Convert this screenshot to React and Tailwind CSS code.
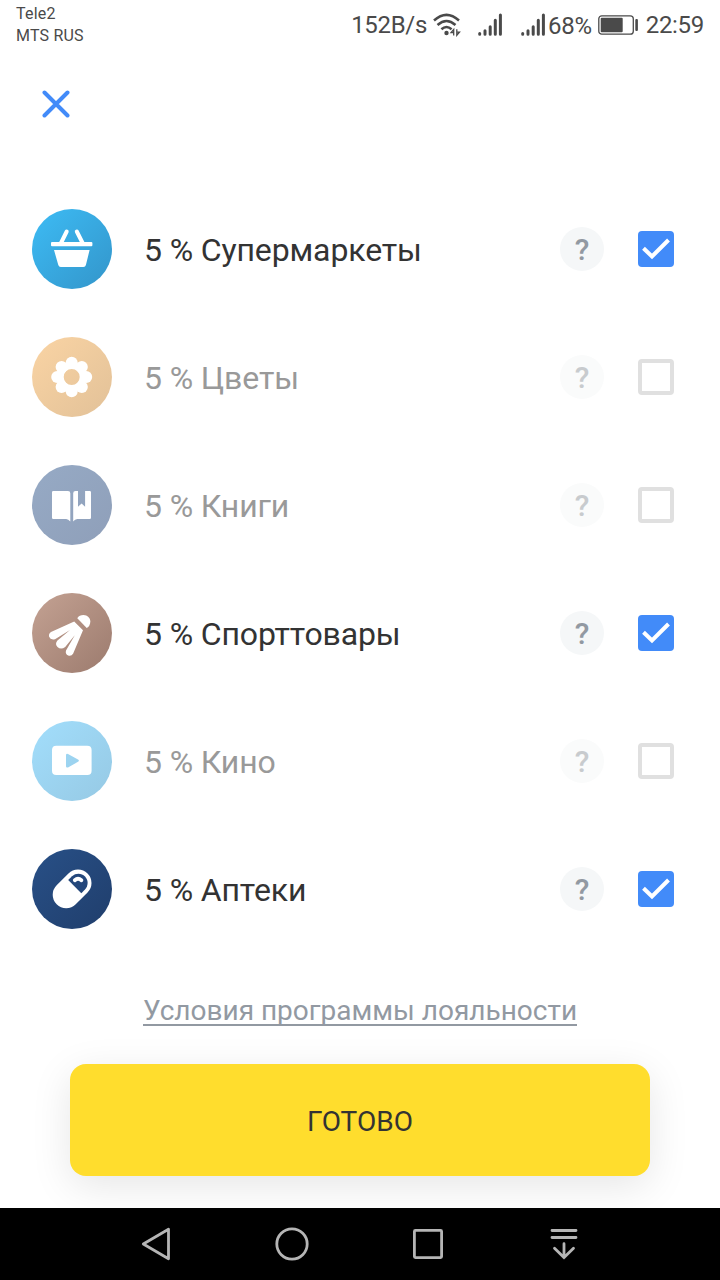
import React from 'react';

function BasketIcon() {
  return (
    <svg viewBox="0 0 80 80" className="w-20 h-20" fill="#fff">
      <path d="M34.7 22.5 29 34M44.8 22.5 50.6 34" stroke="#fff" strokeWidth="4" strokeLinecap="round" />
      <rect x="19" y="33" width="41.4" height="4.3" rx="1" />
      <path d="M22 41h35.6l-3.7 15q-.5 2-2.5 2H28.8q-2 0-2.5-2z" />
    </svg>
  );
}

function FlowerIcon() {
  return (
    <svg viewBox="0 0 80 80" className="w-20 h-20" fill="#fff">
      <circle cx="39.7" cy="25.7" r="6" />
      <circle cx="49.8" cy="29.9" r="6" />
      <circle cx="54.2" cy="40" r="6" />
      <circle cx="49.8" cy="50.1" r="6" />
      <circle cx="39.7" cy="54.3" r="6" />
      <circle cx="29.6" cy="50.1" r="6" />
      <circle cx="25.2" cy="40" r="6" />
      <circle cx="29.6" cy="29.9" r="6" />
      <circle cx="39.7" cy="40" r="11.2" fill="none" stroke="#fff" strokeWidth="6.4" />
    </svg>
  );
}

function BookIcon() {
  return (
    <svg viewBox="0 0 80 80" className="w-20 h-20" fill="#fff">
      <path d="M21.3 26H36q2.3 0 2.3 2.3V56.5Q36.3 54 34.2 54H21.3q-1.3 0-1.3-1.3V27.3q0-1.3 1.3-1.3z" />
      <path d="M46 26v15.7l3.6-3.1 3.5 3.1V26h4.6q1.3 0 1.3 1.3v25.4q0 1.3-1.3 1.3H45.3q-2.4 0-4.1 2.5V28.3Q41.2 26 43.5 26z" />
    </svg>
  );
}

function ShuttlecockIcon() {
  return (
    <svg viewBox="0 0 80 80" className="w-20 h-20" fill="#fff">
      <path d="M45.3 25.3C46.4 23 48.8 22 51.5 22c4 0 6.8 3 6.8 6.5 0 3-1.3 5.3-3.6 6.5z" />
      <path d="M42.2 28.6 51 37.3 41.2 60.4Q39.4 63.6 36.2 62.5 33 61 34 57.4L42.8 42.2 33.2 54Q29 57.2 25.5 54 22.7 51 25.2 47.7L38 37 23 46.2Q18.4 47.2 17.1 43.8 16.4 40.8 19 39z" />
    </svg>
  );
}

function PlayIcon() {
  return (
    <svg viewBox="0 0 80 80" className="w-20 h-20" fill="#fff">
      <path
        fillRule="evenodd"
        d="M24.3 24.7h31q4.3 0 4.3 4.3v20.7q0 4.3-4.3 4.3h-31Q20 54 20 49.7V29q0-4.3 4.3-4.3zM36 33q-2-.6-2 1.2v11q0 1.9 2 1.2l10-5.6q1.8-1.2 0-2.3z"
      />
    </svg>
  );
}

function PillIcon() {
  return (
    <svg viewBox="0 0 80 80" className="w-20 h-20">
      <path d="M34.2 45.8 46 34" stroke="#fff" strokeWidth="27" strokeLinecap="round" />
      <path d="M36.2 31 49.3 44.2 53 40.4C56.6 36.6 56.4 31 53 27.5 49.5 24 43.8 24 40 27.3z" fill="#24477b" />
      <path d="M42.8 31.2Q46 28.4 49.4 31.2" fill="none" stroke="#fff" strokeWidth="3.8" strokeLinecap="round" />
    </svg>
  );
}

const categories = [
  { name: 'Супермаркеты', Icon: BasketIcon, color: 'from-[#3dbcf5] to-[#3395ca]', checked: true },
  { name: 'Цветы', Icon: FlowerIcon, color: 'from-[#fad4a4] to-[#e2c198]', checked: false },
  { name: 'Книги', Icon: BookIcon, color: 'from-[#96aac5] to-[#8f9fb9]', checked: false },
  { name: 'Спорттовары', Icon: ShuttlecockIcon, color: 'from-[#c4a293] to-[#9c7b6e]', checked: true },
  { name: 'Кино', Icon: PlayIcon, color: 'from-[#a2defc] to-[#96c9e4]', checked: false },
  { name: 'Аптеки', Icon: PillIcon, color: 'from-[#285087] to-[#203e6c]', checked: true },
];

function Signal() {
  return (
    <svg viewBox="0 0 24 24" className="w-6 h-6 shrink-0" stroke="#4a4a4a" strokeWidth="3" strokeLinecap="round">
      <path d="M1.7 21.3v-.8M7 21.3v-3.5M12.2 21.3v-7.6M17.3 21.3V7.3M22.4 21.3V2" />
    </svg>
  );
}

function StatusBar() {
  return (
    <header className="flex justify-between h-[50px] px-4 text-[#4a4a4a]">
      <div className="pt-[3px] text-base leading-[22px] tracking-[0.2px]">
        <p>Tele2</p>
        <p>MTS RUS</p>
      </div>
      <div className="flex items-center text-2xl tracking-[-0.3px] whitespace-nowrap">
        <span>152B/s</span>
        <svg viewBox="0 0 28 24" className="w-7 h-6 ml-[6px] mr-[17px]" fill="none" stroke="#4a4a4a" strokeWidth="2.5">
          <path d="M1 7.5Q13.5-3.8 26 7.5M4.5 12Q13.5 4 22.5 12M8.4 16.3Q13.5 11.7 18.6 16.3" />
          <circle cx="13.5" cy="20" r="2.2" fill="#4a4a4a" stroke="none" />
          <path d="M20.7 22.5v-6l-2.7 3.2h3M23.8 16.3v6l2.7-3.2h-3" strokeWidth="1.3" />
        </svg>
        <Signal />
        <span className="w-[19px]" />
        <Signal />
        <span className="ml-[3px] pt-px">68%</span>
        <svg viewBox="0 0 42 22" className="w-[42px] h-[22px] ml-[6px] mr-[6px]" fill="#4a4a4a">
          <rect x=".8" y="1.8" width="34.5" height="18.4" rx="3" fill="none" stroke="#4a4a4a" strokeWidth="1.3" />
          <rect x="2.7" y="3.7" width="22" height="14.6" rx="1" />
          <rect x="37.3" y="5" width="2.6" height="12" rx="1" />
        </svg>
        <span>22:59</span>
      </div>
    </header>
  );
}

function CategoryRow({ name, Icon, color, checked }) {
  return (
    <li className="flex items-center h-32 pl-8 pr-[46px]">
      <span className={`w-20 h-20 shrink-0 rounded-full bg-gradient-to-br ${color}`}>
        <Icon />
      </span>
      <span
        className={`flex-1 ml-8 pt-px text-[32px] leading-10 tracking-[-0.13px] ${
          checked ? 'text-[#333333]' : 'text-[#999999]'
        }`}
      >
        5 % {name}
      </span>
      <button
        className={`w-11 h-11 pt-px mr-[34px] rounded-full text-[30px] leading-[43px] font-medium ${
          checked ? 'bg-[#f5f7f8] text-[#9299a2]' : 'bg-[#fafbfb] text-[#c8cbce]'
        }`}
      >
        ?
      </button>
      {checked ? (
        <span className="w-9 h-9 rounded bg-[#428bf9]">
          <svg viewBox="0 0 36 36" className="w-9 h-9" fill="none" stroke="#fff" strokeWidth="4">
            <path d="M5.5 17.2 14 25.5 30.5 9" />
          </svg>
        </span>
      ) : (
        <span className="w-9 h-9 rounded border-4 border-[#e0e0e0]" />
      )}
    </li>
  );
}

function NavBar() {
  return (
    <nav className="flex items-center justify-between h-[72px] px-[136px] bg-black">
      <svg viewBox="0 0 40 40" className="w-10 h-10" fill="none" stroke="#b5b5b5" strokeWidth="2.8" strokeLinejoin="round">
        <path d="M7.3 20 32.5 5.2v29.6z" />
      </svg>
      <svg viewBox="0 0 40 40" className="w-10 h-10" fill="none" stroke="#b5b5b5" strokeWidth="2.8">
        <circle cx="20" cy="20" r="15.2" />
      </svg>
      <svg viewBox="0 0 40 40" className="w-10 h-10" fill="none" stroke="#b5b5b5" strokeWidth="2.8">
        <rect x="6.4" y="6.4" width="27.2" height="27.2" rx="1" />
      </svg>
      <svg viewBox="0 0 40 40" className="w-10 h-10" fill="none" stroke="#b5b5b5" strokeWidth="2.8" strokeLinecap="round">
        <path d="M8 6.5h24M8 13.5h24M20 19.7v14M10.5 24.2 20 33.6l9.5-9.4" />
      </svg>
    </nav>
  );
}

export default function App() {
  return (
    <div className="flex flex-col w-[720px] h-[1280px] overflow-hidden bg-white font-['Roboto',sans-serif]">
      <StatusBar />
      <div className="h-[135px] pt-[40px] pl-[42px]">
        <svg viewBox="0 0 28 28" className="w-7 h-7" stroke="#428bf9" strokeWidth="4" strokeLinecap="round">
          <path d="M2.5 2.5l23 23M25.5 2.5l-23 23" />
        </svg>
      </div>
      <ul>
        {categories.map((category) => (
          <CategoryRow key={category.name} {...category} />
        ))}
      </ul>
      <div className="flex flex-col items-center flex-1 pt-[45px]">
        <a href="#" className="h-7 border-b-2 border-[#9299a2] text-[28px] leading-[26px] text-[#9299a2]">
          Условия программы лояльности
        </a>
        <button className="w-[580px] h-28 mt-[38px] pt-1 rounded-2xl bg-[#ffdd2d] text-[28px] text-[#333333] shadow-[0_10px_40px_rgba(0,0,0,0.1)]">
          ГОТОВО
        </button>
      </div>
      <NavBar />
    </div>
  );
}
